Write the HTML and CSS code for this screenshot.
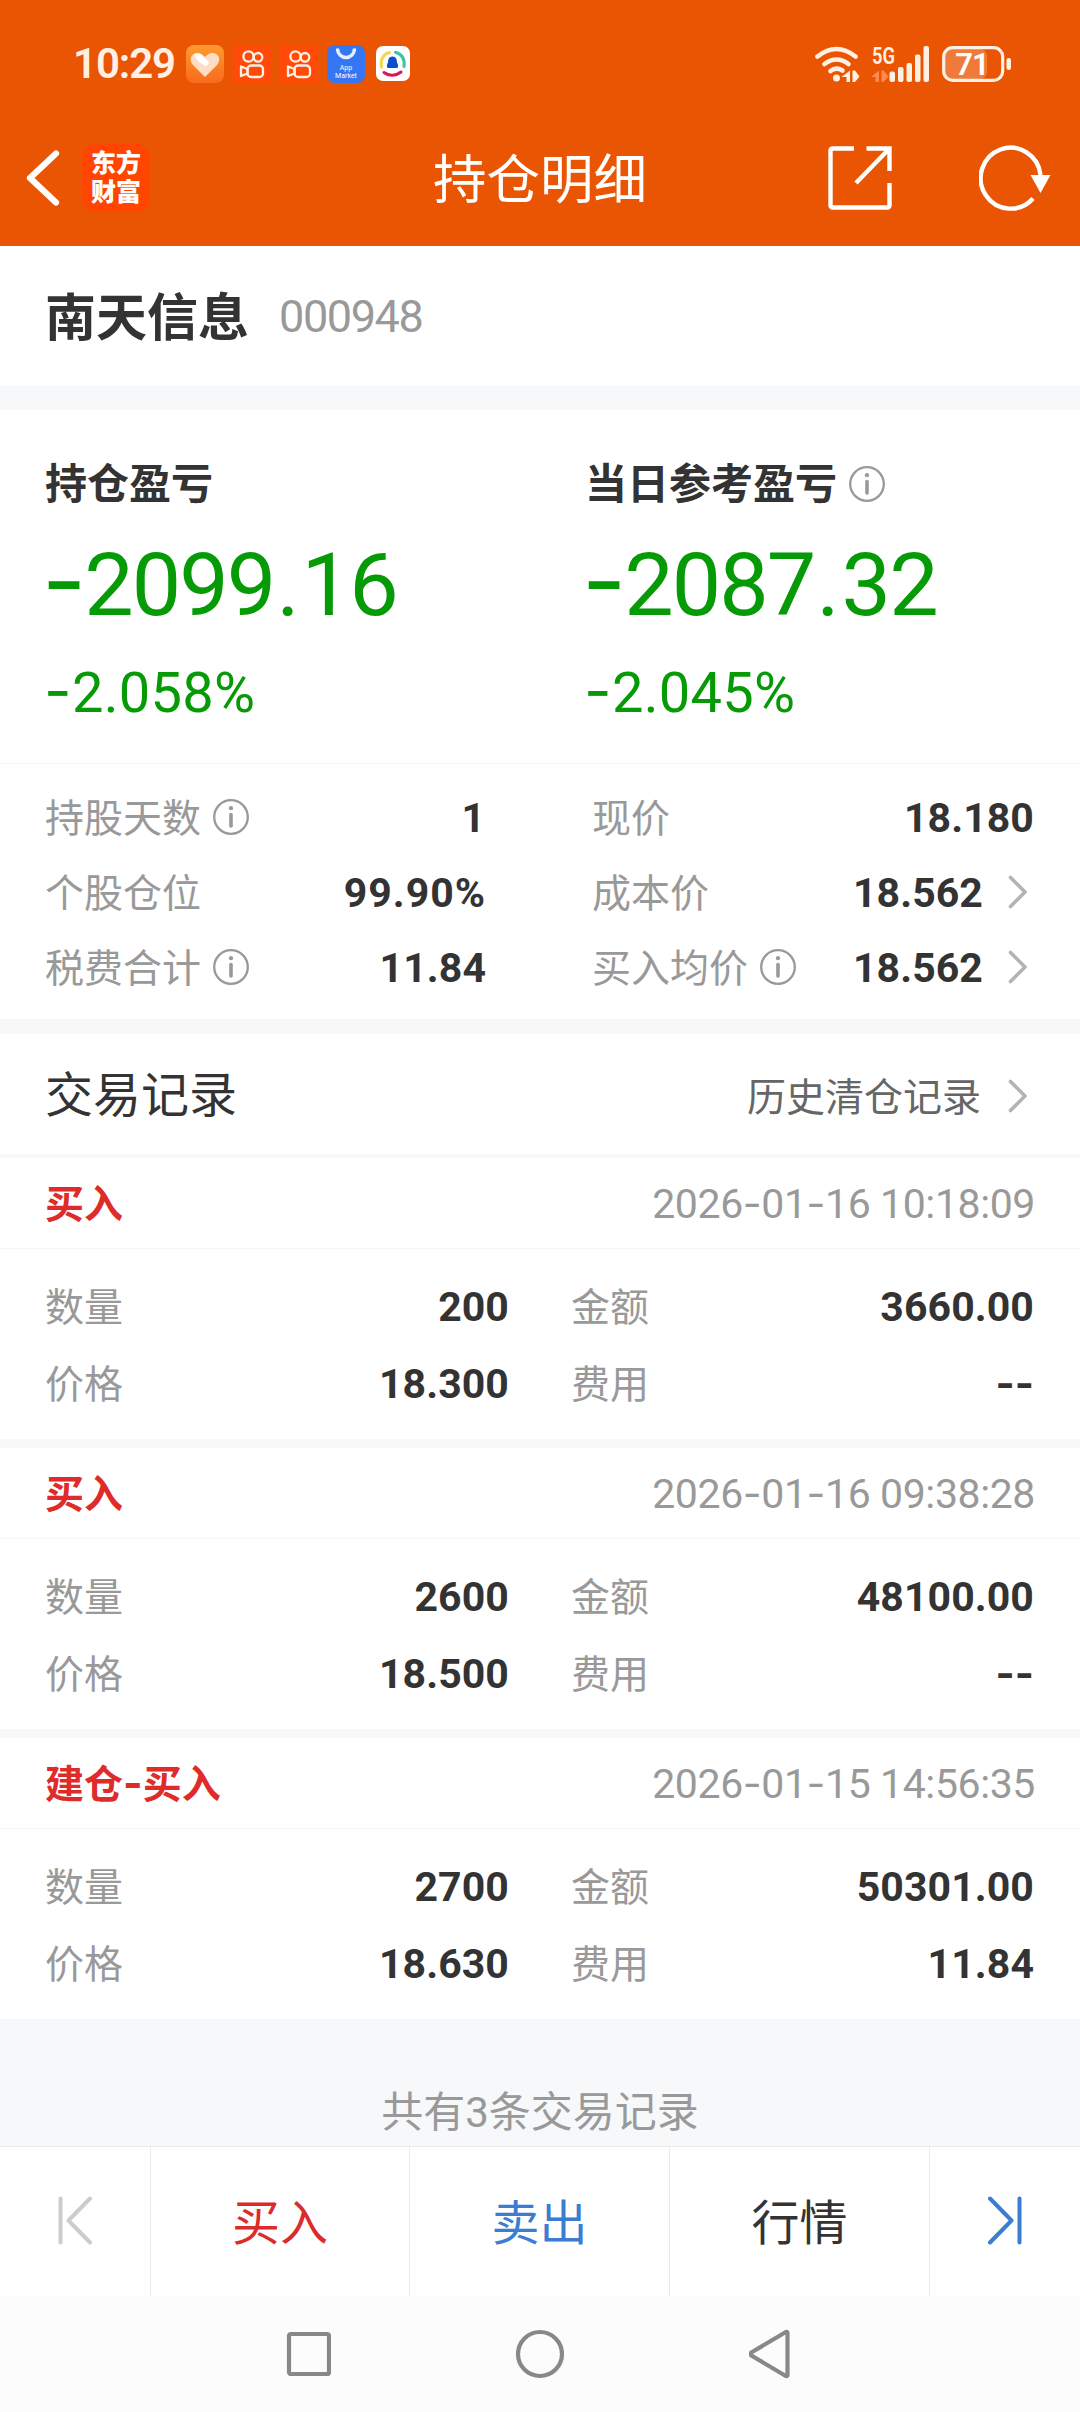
FILE: index.html
```html
<!DOCTYPE html>
<html lang="zh-CN">
<head>
<meta charset="utf-8">
<title>持仓明细</title>
<link rel="stylesheet" href="styles.css">
</head>
<body>
<svg class="defs" width="0" height="0">
  <symbol id="info" viewBox="0 0 36 36">
    <circle cx="18" cy="18" r="16.8" fill="none" stroke="#999" stroke-width="2.3"/>
    <circle cx="18" cy="9.2" r="2.1" fill="#999"/>
    <path d="M18 15.5V27" stroke="#999" stroke-width="3.6" stroke-linecap="round"/>
  </symbol>
  <symbol id="chevron" viewBox="0 0 20 34">
    <path d="M2.5 2.5L17 17 2.5 31.500" fill="none" stroke="#b3b3b3" stroke-width="3.6" stroke-linecap="round" stroke-linejoin="round"/>
  </symbol>
  <symbol id="kuai" viewBox="0 0 38 38">
    <rect width="38" height="38" fill="#ff4a08"/>
    <g fill="none" stroke="#fff0e4" stroke-width="2.3" stroke-linejoin="round">
      <circle cx="15.500" cy="11.500" r="5.100"/><circle cx="25" cy="12.300" r="4.300"/>
      <rect x="14.500" y="20.500" width="15.500" height="11.500" rx="3.800"/>
      <path d="M8 21.500L14.500 24v4.500L8 31z"/>
    </g>
  </symbol>
</svg>

<header class="header">
  <div class="status">
    <span class="clock">10:29</span>
    <div class="apps">
      <svg width="38" height="38" viewBox="0 0 38 38">
        <defs><linearGradient id="og" x1="0" y1="0" x2="0" y2="1"><stop offset="0" stop-color="#ff9a2e"/><stop offset="1" stop-color="#f96a1e"/></linearGradient></defs>
        <rect width="38" height="38" rx="8" fill="url(#og)"/>
        <path d="M19 32L7 20C2 14 6 8 11.500 8 15 8 17 10 19 12 21 10 23 8 26.500 8 32 8 36 14 31 20z" fill="#ffdcc4"/>
        <path d="M7.500 9.500Q12 6.500 16 10.500L23.500 17.500 20 21.500 12.500 16.500z" fill="#fff"/>
      </svg>
      <svg width="38" height="38"><use href="#kuai"/></svg>
      <svg width="38" height="38"><use href="#kuai"/></svg>
      <svg width="38" height="38" viewBox="0 0 38 38">
        <rect width="38" height="38" rx="8" fill="#3577f2"/>
        <path d="M10.500 3.500C11 15.500 27 15.500 27.500 3.500" fill="none" stroke="#e4f0ff" stroke-width="3.400"/>
        <text x="19" y="25" class="market">App</text><text x="19" y="32.500" class="market">Market</text>
      </svg>
      <svg class="qq" width="34" height="35" viewBox="0 0 34 35">
        <rect width="34" height="35" rx="7" fill="#fff"/>
        <g fill="none" stroke-width="3" stroke-linecap="round">
          <path d="M5.500 21C4 14 7 8 13.500 6.500" stroke="#f5d64c"/>
          <path d="M19.500 6.200C25.500 8 29 13 28 20.500" stroke="#3fc3a6"/>
          <path d="M8 26.500C13 30.500 20 30 25 26" stroke="#d8155d"/>
        </g>
        <path d="M16.500 10.500c4 0 4.500 4 4.500 6 1 1.500 1.500 4 .5 5.500h-10c-1-1.500-.5-4 .5-5.500 0-2 .5-6 4.500-6z" fill="#0b4fd0"/>
      </svg>
    </div>
    <div class="signals">
      <svg width="46" height="36" viewBox="0 0 46 36">
        <g fill="none" stroke="#fff0e4" stroke-width="4.600" stroke-linecap="round">
          <path d="M3.500 10.500Q22.500-4.500 41.500 10.500"/><path d="M10.500 18Q22.500 9 34.500 18"/><path d="M16.500 25Q22 20.500 28.500 24.500"/>
        </g>
        <circle cx="22.500" cy="32" r="3.500" fill="#fff0e4"/>
        <path d="M36 24.500V36h-3.500v-5H27.500zM38.500 24.500h2.500l4.500 6-4.500 5.500h-2.500z" fill="#fff0e4"/>
      </svg>
      <svg width="60" height="52" viewBox="0 -8 60 52">
        <text x="1" y="17.500" class="net" textLength="23" lengthAdjust="spacingAndGlyphs">5G</text>
        <path d="M8 24.500V36H4.500v-5H0zM10.500 24.500h2l5 6-5 5.500h-2z" fill="#ff8a4d"/>
        <g fill="#fff0e4">
          <rect x="18.500" y="25.500" width="5.500" height="10.500" rx="2"/><rect x="27" y="21" width="5.500" height="15" rx="2"/>
          <rect x="35.500" y="17" width="5.500" height="19" rx="2"/><rect x="44" y="8.500" width="5.500" height="27.500" rx="2"/>
          <rect x="52.500" y="0" width="5.500" height="36" rx="2"/>
        </g>
      </svg>
      <svg width="70" height="36" viewBox="0 0 70 36">
        <rect x="3" y="3" width="42" height="30" rx="7" fill="#f07a3a"/>
        <rect x="1.700" y="1.700" width="59" height="32.600" rx="9" fill="none" stroke="#fff0e4" stroke-width="3.200"/>
        <rect x="64.500" y="12" width="4.500" height="12" rx="2" fill="#fff0e4"/>
        <text x="30" y="28.500" class="battery">71</text>
      </svg>
    </div>
  </div>
  <div class="appbar">
    <div class="left">
      <svg width="34" height="56" viewBox="0 0 34 56"><path d="M30 3.500L4 28 30 52.500" fill="none" stroke="#fff" stroke-width="6.200" stroke-linecap="round" stroke-linejoin="round"/></svg>
      <div class="logo">东方<br>财富</div>
    </div>
    <h1>持仓明细</h1>
    <div class="right">
      <svg width="64" height="64" viewBox="0 0 64 64" fill="none" stroke="#fff" stroke-width="4.400">
        <path d="M26 2.500H4.500a2 2 0 0 0-2 2V59.500a2 2 0 0 0 2 2H59.500a2 2 0 0 0 2-2V37"/>
        <path d="M38.500 2.500H61.500V25M61 3L28 37"/>
      </svg>
      <svg width="72" height="66" viewBox="0 0 72 66">
        <path d="M54 53.500A30 30.500 0 1 1 61.500 30" fill="none" stroke="#fff" stroke-width="4.400"/>
        <path d="M51.500 30H71.500L61.500 48z" fill="#fff"/>
      </svg>
    </div>
  </div>
</header>

<section class="stock"><h2>南天信息</h2><span class="code">000948</span></section>

<section class="profit">
  <div class="cell">
    <h3>持仓盈亏</h3>
    <div class="amount"><i>-</i>2099<u>.</u>16</div>
    <div class="rate"><i>-</i>2.058%</div>
  </div>
  <div class="cell">
    <h3>当日参考盈亏<svg class="info"><use href="#info"/></svg></h3>
    <div class="amount"><i>-</i>2087<u>.</u>32</div>
    <div class="rate"><i>-</i>2.045%</div>
  </div>
</section>

<section class="stats">
  <dl>
    <div><dt>持股天数<svg class="info"><use href="#info"/></svg></dt><dd class="one">1</dd></div>
    <div><dt>个股仓位</dt><dd class="share">99.90%</dd></div>
    <div><dt>税费合计<svg class="info"><use href="#info"/></svg></dt><dd>11.84</dd></div>
  </dl>
  <dl>
    <div><dt>现价</dt><dd>18.180</dd></div>
    <div><dt>成本价</dt><dd>18.562<svg class="chev"><use href="#chevron"/></svg></dd></div>
    <div><dt>买入均价<svg class="info"><use href="#info"/></svg></dt><dd>18.562<svg class="chev"><use href="#chevron"/></svg></dd></div>
  </dl>
</section>

<section class="records-head">
  <h2>交易记录</h2>
  <a>历史清仓记录<svg class="chev"><use href="#chevron"/></svg></a>
</section>

<main class="records">
  <article>
    <header><b>买入</b><time>2026<i>-</i>01<i>-</i>16 10:18:09</time></header>
    <dl>
      <div><dt>数量</dt><dd>200</dd></div><div><dt>金额</dt><dd>3660.00</dd></div>
      <div><dt>价格</dt><dd>18.300</dd></div><div><dt>费用</dt><dd class="empty"><i>--</i></dd></div>
    </dl>
  </article>
  <article>
    <header><b>买入</b><time>2026<i>-</i>01<i>-</i>16 09:38:28</time></header>
    <dl>
      <div><dt>数量</dt><dd>2600</dd></div><div><dt>金额</dt><dd>48100.00</dd></div>
      <div><dt>价格</dt><dd>18.500</dd></div><div><dt>费用</dt><dd class="empty"><i>--</i></dd></div>
    </dl>
  </article>
  <article>
    <header><b>建仓<i>-</i>买入</b><time>2026<i>-</i>01<i>-</i>15 14:56:35</time></header>
    <dl>
      <div><dt>数量</dt><dd>2700</dd></div><div><dt>金额</dt><dd>50301.00</dd></div>
      <div><dt>价格</dt><dd>18.630</dd></div><div><dt>费用</dt><dd>11.84</dd></div>
    </dl>
  </article>
</main>
<p class="total">共有3条交易记录</p>

<nav class="actions">
  <a><svg width="34" height="49" viewBox="0 0 34 49" fill="none" stroke="#ccc" stroke-width="4" stroke-linecap="round" stroke-linejoin="round"><path d="M2.500 2.500V46.500M32 2.500L10.500 24.500 32 46.500"/></svg></a>
  <a class="text buy">买入</a>
  <a class="text sell">卖出</a>
  <a class="text">行情</a>
  <a><svg width="34" height="49" viewBox="0 0 34 49" fill="none" stroke="#3b7dd0" stroke-width="4" stroke-linecap="round" stroke-linejoin="round"><path d="M31.500 2.500V46.500M2 2.500L23.500 24.500 2 46.500"/></svg></a>
</nav>

<div class="sysnav">
  <svg width="46" height="50" viewBox="0 0 46 50"><rect x="4" y="5" width="40" height="40" rx="2" fill="none" stroke="#888" stroke-width="4.200"/></svg>
  <svg width="50" height="50" viewBox="0 0 50 50"><circle cx="25" cy="25" r="22" fill="none" stroke="#888" stroke-width="4.200"/></svg>
  <svg width="46" height="50" viewBox="0 0 46 50"><path d="M38.500 3.500V46.500Q37.500 47.500 36 46.500L2.300 26.500Q.8 25 2.300 23.500L36 3.500Q37.500 2.500 38.500 3.500z" fill="none" stroke="#888" stroke-width="4.200" stroke-linejoin="round"/></svg>
</div>
</body>
</html>
```
FILE: styles.css
```css
* { box-sizing: border-box; margin: 0; padding: 0; }
body {
  width: 1080px; height: 2412px; display: flex; flex-direction: column;
  background: #f6f8fa; color: #333; font-family: Roboto, "Noto Sans CJK SC", sans-serif;
  font-size: 39px; line-height: 1.2; overflow: hidden;
}
svg { display: block; flex: none; }
.defs { position: absolute; }
i { font-style: normal; font-family: Inter, sans-serif; }
u { text-decoration: none; }
.info { width: 36px; height: 36px; }
.chev { width: 20px; height: 34px; }

/* orange header */
.header { height: 246px; background: #ea5504; color: #fff; }
.status { height: 127px; padding: 0 68px 0 73px; display: flex; align-items: center; }
.clock { width: 113px; color: #fff0e4; font-size: 42px; font-weight: 600; letter-spacing: -1.1px; padding-top: 1px; }
.apps { display: flex; align-items: center; gap: 9px; }
.qq { margin-left: 2px; }
.signals { margin-left: auto; display: flex; align-items: center; gap: 11px; }
.market { fill: #fff; font-size: 7px; text-anchor: middle; }
.net { fill: #fff0e4; font-size: 24px; font-weight: 600; }
.battery { fill: #fff; font-size: 31px; font-weight: 600; text-anchor: middle; letter-spacing: -1px; }
.appbar { height: 119px; padding: 0 29px 17px 26px; display: grid; grid-template-columns: 1fr auto 1fr; align-items: center; }
.left, .right { display: flex; align-items: center; }
.left { gap: 22px; }
.right { justify-content: flex-end; gap: 87px; }
.appbar h1 { font-size: 53.5px; font-weight: 400; padding: 7px 0 0 3px; }
.logo { width: 68px; height: 68px; border-radius: 14px; background: #ff4500; text-align: center; font-size: 25px; line-height: 29px; font-weight: 900; padding-top: 5px; }

/* stock name */
.stock { height: 140px; background: #fff; padding: 0 45px; display: flex; align-items: center; gap: 30px; }
.stock h2 { font-size: 51px; font-weight: 700; padding-top: 5px; }
.code { color: #999; font-size: 45px; letter-spacing: -1.4px; padding-top: 1px; }

/* profit */
.profit { height: 354px; margin-top: 24px; padding: 49px 45px 0; background: #fff; border-bottom: 1px solid #f3f4f6; display: grid; grid-template-columns: 540px 1fr; }
.profit h3 { height: 50px; display: flex; align-items: center; gap: 12px; font-size: 42px; font-weight: 700; padding-top: 2px; }
.profit h3 .info { margin-top: -3px; }
.amount, .rate { color: #069b06; white-space: nowrap; }
.amount { font-size: 88px; letter-spacing: -1.9px; line-height: 104px; margin: 24px 0 0 -3px; }
.amount u { letter-spacing: 2px; margin-left: 2px; }
.amount i { font-size: 96px; letter-spacing: -2px; line-height: 1px; }
.rate { font-size: 56px; letter-spacing: 0.3px; line-height: 68px; margin: 22px 0 0 -1px; }
.rate i { font-size: 60px; line-height: 1px; }

/* stats */
.stats { height: 255px; padding: 16px 46px 0 45px; background: #fff; display: grid; grid-template-columns: 441px 442px; justify-content: space-between; }
.stats dl > div { height: 75px; display: flex; align-items: center; justify-content: space-between; }
dt { color: #999; display: flex; align-items: center; gap: 12px; padding-top: 3px; }
dt .info { margin-top: -4px; }
dd { font-size: 41px; font-weight: 700; letter-spacing: .1px; display: flex; align-items: center; padding-top: 2px; }
dd .chev { margin: -3px 6px 0 25px; }
.share { letter-spacing: 1px; }
.one { padding-right: 1px; }
.empty { padding-top: 0; }

/* records */
.records-head { height: 121px; margin-top: 15px; padding: 3px 52px 0 45px; background: #fff; display: flex; align-items: center; justify-content: space-between; border-bottom: 1px solid #f6f7fa; }
.records-head h2 { font-size: 48px; font-weight: 400; }
.records-head a { display: flex; align-items: center; gap: 27px; color: #666; padding-top: 6px; }
.records-head .chev { margin-top: -5px; }
.records { padding-top: 3px; display: flex; flex-direction: column; gap: 9px; }
article { height: 281px; background: #fff; }
article header { height: 91px; padding: 0 45px; display: flex; align-items: center; justify-content: space-between; border-bottom: 1px solid #f5f6f8; }
article b { color: #e02b2b; font-weight: 700; padding-top: 4px; }
article b i { font-size: 42px; line-height: 1px; }
time { color: #999; font-size: 41px; letter-spacing: -0.4px; padding-top: 2px; }
article dl { padding: 19px 46px 0 45px; display: grid; grid-template-columns: 464px 463px; justify-content: space-between; }
article dl div { height: 77px; display: flex; align-items: center; justify-content: space-between; }
.total { height: 127px; padding-top: 69px; text-align: center; font-size: 42px; color: #999; }

/* bottom bars */
.actions { height: 150px; background: #fff; border-top: 1px solid #e9e9e9; display: grid; grid-template-columns: 151px 259px 260px 260px 150px; font-size: 48px; }
.actions a { display: flex; align-items: center; justify-content: center; border-right: 1px solid #ebebeb; padding-bottom: 2px; }
.actions .text { padding: 4px 0 0; }
.actions a:last-child { border-right: 0; }
.buy { color: #dc2b2b; }
.sell { color: #3b7dd0; }
.sysnav { height: 116px; background: #fcfcfc; display: flex; align-items: center; justify-content: center; gap: 184px; }
```
